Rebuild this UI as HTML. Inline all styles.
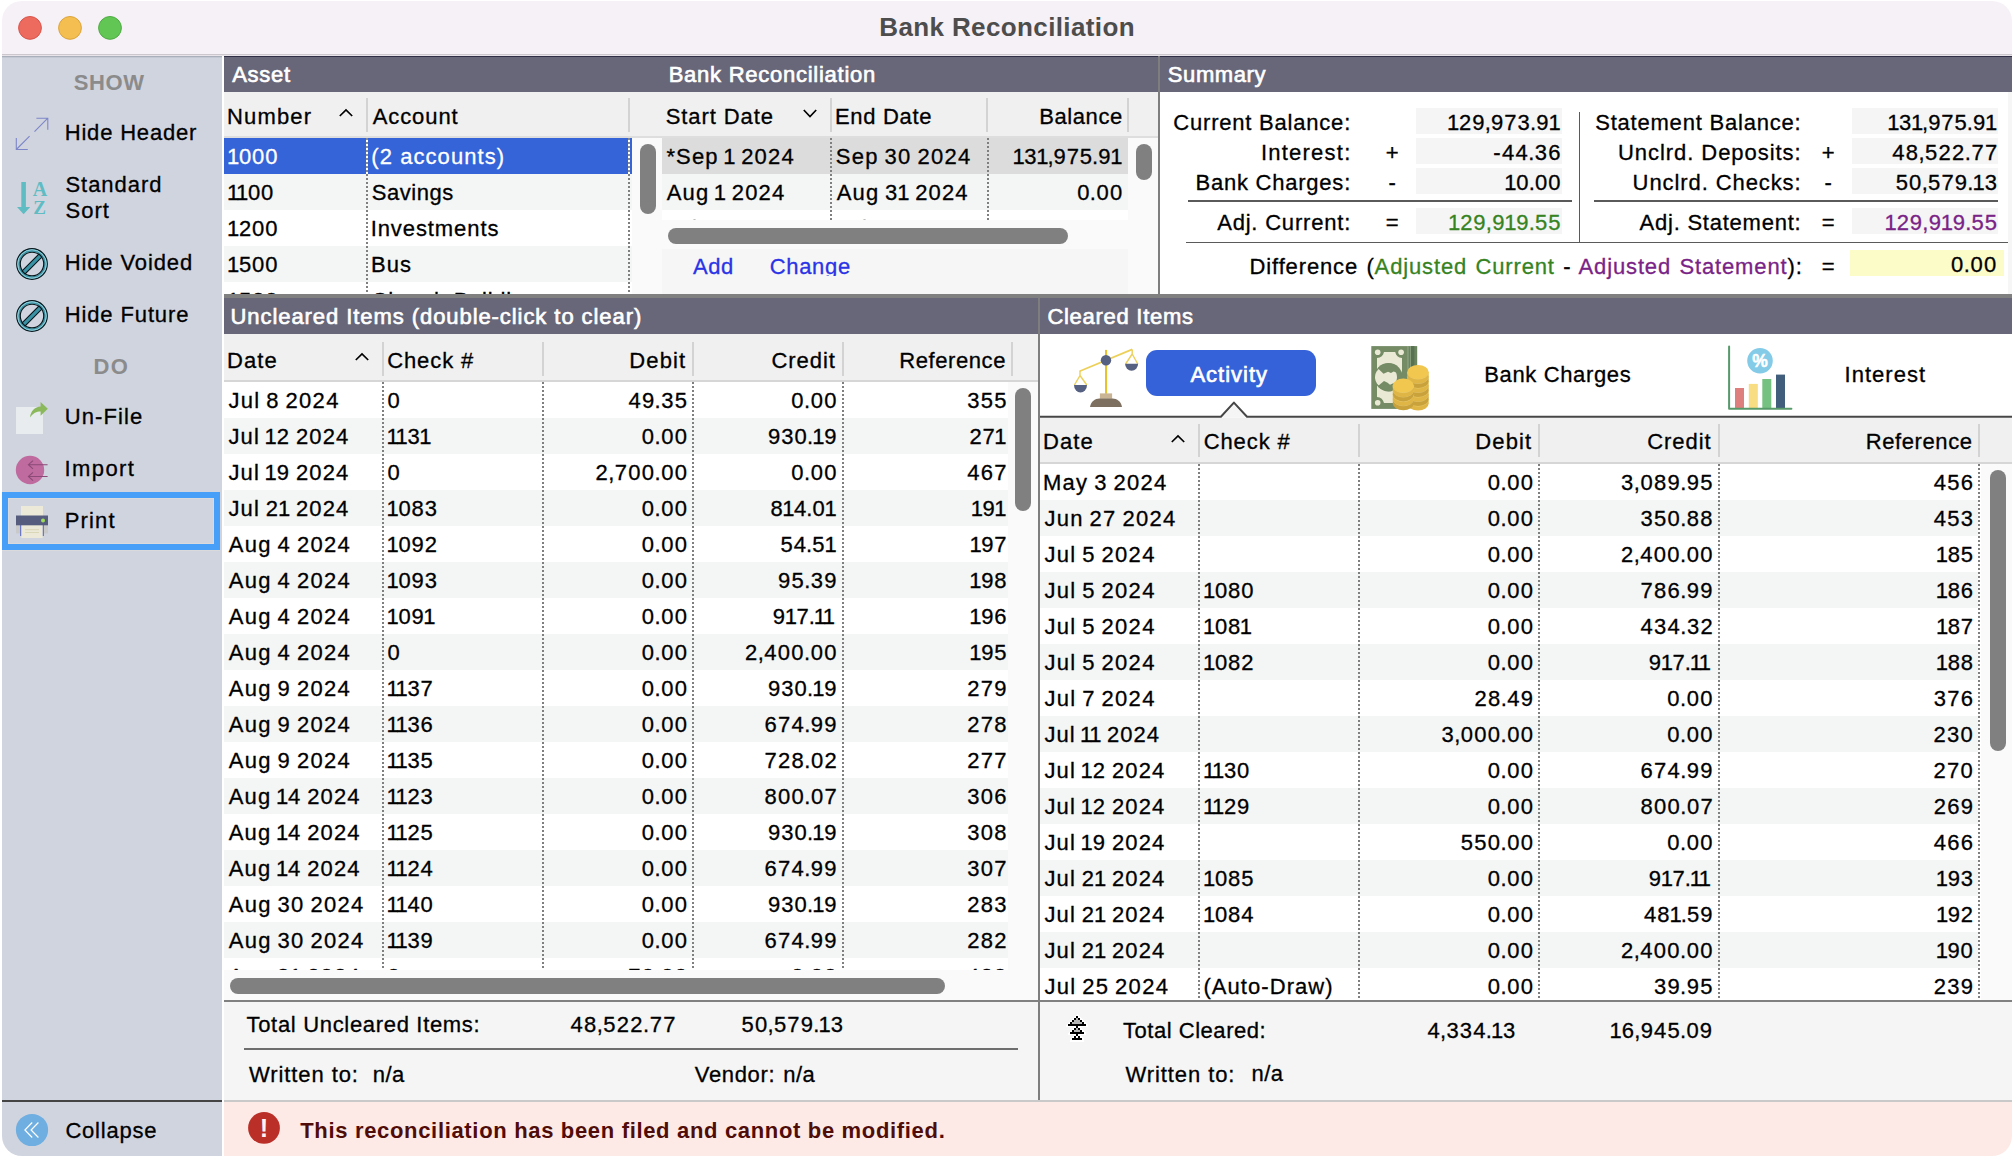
<!DOCTYPE html><html lang="en"><head><meta charset="utf-8"><title>Bank Reconciliation</title><style>
*{box-sizing:border-box;margin:0;padding:0}
html,body{width:2012px;height:1156px;background:#fff;overflow:hidden}
body{font-family:"Liberation Sans",sans-serif;font-size:22px;line-height:26px;color:#000;position:relative}
.win{position:absolute;left:2px;top:1px;width:2010px;height:1155px;border-radius:20px;overflow:hidden;background:#fff}
.abs{position:absolute}
.t{position:absolute;white-space:nowrap;line-height:26px;-webkit-text-stroke:0.3px}
.n{--l:1.27px;letter-spacing:var(--l);word-spacing:-1.5px}
.n i{font-style:normal;letter-spacing:calc(var(--l) - 2.4px);margin:0 1.2px 0 -1.2px}
.n b{font-weight:inherit;margin:0 -0.8px}
.bar{position:absolute;background:#686779;color:#fff;height:36px}
.bar .t{color:#fff}
.hdr{position:absolute;background:#f0f0f0}
.sep{position:absolute;width:2px;background:#d3d3d3}
.dot{position:absolute;width:2px;background-image:linear-gradient(to bottom,#7f7f7f 0,#7f7f7f 2px,transparent 2px,transparent 4px);background-size:2px 4px}
.thumb{position:absolute;background:#808080;border-radius:8px}
.row{position:absolute;left:0;height:36px}
.alt{background:#f4f5f5}
.vbox{position:absolute;background:#f5f5f5;height:26px}
svg{position:absolute;overflow:visible}
</style></head><body>
<div class="win"><div class="abs" style="left:-2px;top:-1px;width:2012px;height:1156px">
<header class="abs" style="left:0;top:0;width:2012px;height:54px;background:#f6f0f7">
<svg style="left:10px;top:10px" width="120" height="36" viewBox="10 10 120 36"><circle cx="30" cy="27.9" r="11.4" fill="#ed6a5f" stroke="#d8554b" stroke-width="1"/><circle cx="70" cy="27.9" r="11.4" fill="#f4bf50" stroke="#dba43c" stroke-width="1"/><circle cx="110" cy="27.9" r="11.4" fill="#62c655" stroke="#4fab43" stroke-width="1"/></svg>
<span class="t title" style="top:12.25px;left:879.26px;letter-spacing:0.38px;color:#4d4d4d;font-weight:700;-webkit-text-stroke:0;font-size:26px;line-height:30px;">Bank Reconciliation</span>
</header>
<div style="position:absolute;left:0px;top:54px;width:2012px;height:1px;background:#cbc7cd;"></div>
<div style="position:absolute;left:0px;top:55px;width:2012px;height:1px;background:#e8e4ea;"></div>
<nav aria-label="Sidebar"><div class="abs" style="left:0;top:56px;width:222px;height:1100px;background:#d0d4df"></div>
<span class="t" style="top:69.50px;left:73.87px;letter-spacing:0.57px;color:#8b8b8b;font-weight:700;-webkit-text-stroke:0;">SHOW</span>
<span class="t" style="top:354.00px;left:93.53px;letter-spacing:1.40px;color:#8b8b8b;font-weight:700;-webkit-text-stroke:0;">DO</span>
<div style="position:absolute;left:2px;top:56px;width:220px;height:1px;background:#a9afbb;"></div>
<div style="position:absolute;left:2px;top:57px;width:220px;height:1px;background:#c3c8d3;"></div>
<div class="abs" style="left:2px;top:492px;width:218px;height:58px;border:6px solid #479ff7"></div>
<div class="abs" style="left:8px;top:498px;width:206px;height:46px;border:1px solid #dad9dc"></div>
<div style="position:absolute;left:2px;top:550px;width:218px;height:1px;background:#dadadd;"></div>
<span class="t" style="top:120.00px;left:64.70px;letter-spacing:0.82px;">Hide Header</span>
<span class="t" style="top:172.00px;left:65.50px;letter-spacing:0.95px;">Standard</span>
<span class="t" style="top:197.50px;left:65.50px;letter-spacing:1.02px;">Sort</span>
<span class="t" style="top:250.00px;left:64.70px;letter-spacing:0.89px;">Hide Voided</span>
<span class="t" style="top:301.50px;left:64.70px;letter-spacing:0.88px;">Hide Future</span>
<span class="t" style="top:404.00px;left:64.80px;letter-spacing:1.09px;">Un-File</span>
<span class="t" style="top:456.00px;left:64.47px;letter-spacing:1.42px;">Import</span>
<span class="t" style="top:507.75px;left:64.70px;letter-spacing:1.18px;">Print</span>
<span class="t" style="top:1117.50px;left:65.38px;letter-spacing:0.78px;">Collapse</span>
<div style="position:absolute;left:2px;top:1100px;width:220px;height:2px;background:#444444;"></div>
<svg style="left:8px;top:108px" width="50" height="50" viewBox="8 108 50 50" fill="none" stroke="#7d86c8" stroke-width="1.1"><path d="M34.5 131.7 L47.8 118.2 M36.4 118.2 H47.8 V129.8"/><path d="M29.6 136.2 L16.3 149.5 M16.3 138 V149.5 H27.8"/></svg>
<svg style="left:8px;top:176px" width="50" height="44" viewBox="8 176 50 44"><path d="M21.3 182 H25.9 V207 H30.2 L23.6 214.2 L17 207 H21.3 Z" fill="#5fbcc3"/><text x="40" y="196" text-anchor="middle" font-family="Liberation Serif, serif" font-weight="700" font-size="20" fill="#5fbcc3">A</text><text x="39.6" y="214" text-anchor="middle" font-family="Liberation Serif, serif" font-weight="700" font-size="19" fill="#5fbcc3">Z</text></svg>
<svg style="left:14px;top:246px" width="36" height="36" viewBox="-18 -18 36 36"><circle r="15.25" fill="none" stroke="#06161b" stroke-width="1.3"/><circle r="13.5" fill="none" stroke="#3a93a5" stroke-width="2.6"/><circle r="14.2" fill="none" stroke="#b9eaf2" stroke-width="0.7"/><circle r="11.75" fill="none" stroke="#06161b" stroke-width="1.2"/><path d="M-9.9 6.9 L6.9 -9.9 L9.9 -6.9 L-6.9 9.9 Z" fill="#3a93a5" stroke="#06161b" stroke-width="1.1"/><path d="M-10.6 7.6 L7.6 -10.6 M-7.6 10.6 L10.6 -7.6" stroke="#3a93a5" stroke-width="0" /></svg>
<svg style="left:14px;top:298px" width="36" height="36" viewBox="-18 -18 36 36"><circle r="15.25" fill="none" stroke="#06161b" stroke-width="1.3"/><circle r="13.5" fill="none" stroke="#3a93a5" stroke-width="2.6"/><circle r="14.2" fill="none" stroke="#b9eaf2" stroke-width="0.7"/><circle r="11.75" fill="none" stroke="#06161b" stroke-width="1.2"/><path d="M-9.9 6.9 L6.9 -9.9 L9.9 -6.9 L-6.9 9.9 Z" fill="#3a93a5" stroke="#06161b" stroke-width="1.1"/><path d="M-10.6 7.6 L7.6 -10.6 M-7.6 10.6 L10.6 -7.6" stroke="#3a93a5" stroke-width="0" /></svg>
<svg style="left:12px;top:398px" width="40" height="40" viewBox="12 398 40 40"><rect x="16" y="407" width="27" height="27" fill="#e8ecef"/><path d="M30 417.4 C31 410.5 35 407 40.6 406.6 V402 L47.8 408.8 L40.6 415.8 V411.4 C36.5 411.4 33 413 30 417.4 Z" fill="#8ab85b"/></svg>
<svg style="left:12px;top:452px" width="40" height="36" viewBox="12 452 40 36"><circle cx="30" cy="470" r="14.2" fill="#bf6b9f"/><path d="M47.6 464.7 H28.4 M33 460.6 L28.4 464.7 L33 468.8 M47.6 476.5 H28.4 M33 472.4 L28.4 476.5 L33 480.6" fill="none" stroke="#8b4a77" stroke-width="1.1"/></svg>
<svg style="left:12px;top:502px" width="40" height="40" viewBox="12 502 40 40"><rect x="21" y="506" width="22" height="10" fill="#ece9d8"/><rect x="16" y="525" width="4.2" height="8.4" fill="#c9c9c9"/><rect x="43.8" y="525" width="4.2" height="8.4" fill="#c9c9c9"/><rect x="20" y="525" width="1.6" height="11" fill="#6c79c2"/><rect x="42.4" y="525" width="1.6" height="11" fill="#6c79c2"/><rect x="21.4" y="524" width="21.2" height="14" fill="#ece9d8"/><rect x="16" y="515.5" width="32" height="9.8" fill="#555c7e"/><circle cx="43" cy="520.5" r="2" fill="#9fdc5a"/><path d="M25 529.7 H39 M25 532.5 H39" stroke="#d6d0b0" stroke-width="0.8"/></svg>
<svg style="left:14px;top:1112px" width="36" height="36" viewBox="14 1112 36 36"><circle cx="32" cy="1130" r="16.1" fill="#6faee0"/><path d="M32.2 1122.5 L24.9 1130 L32.2 1137.5 M38.4 1122.5 L31.1 1130 L38.4 1137.5" fill="none" stroke="#fff" stroke-width="1.2"/></svg>
</nav>
<section aria-label="Asset accounts and bank reconciliations"><div class="abs" style="left:224px;top:56px;width:934px;height:238px;background:#fff"></div>
<div class="bar" style="left:224px;top:56px;width:934px;border-top:1px solid #2f2e46"></div>
<span class="t" style="top:62.00px;left:232.21px;letter-spacing:0.73px;color:#fff;-webkit-text-stroke:0.65px #fff;">Asset</span>
<span class="t" style="top:62.00px;left:668.70px;letter-spacing:0.74px;color:#fff;-webkit-text-stroke:0.65px #fff;">Bank Reconciliation</span>
<div style="position:absolute;left:224px;top:92px;width:934px;height:44px;background:#f0f0f0;"></div>
<div style="position:absolute;left:224px;top:136px;width:934px;height:2px;background:#dedede;"></div>
<div class="sep" style="left:366px;top:98px;height:34px"></div>
<div class="sep" style="left:628px;top:98px;height:34px"></div>
<div class="sep" style="left:830px;top:98px;height:34px"></div>
<div class="sep" style="left:986px;top:98px;height:34px"></div>
<div class="sep" style="left:1127px;top:98px;height:34px"></div>
<span class="t" style="top:103.75px;left:226.95px;letter-spacing:1.18px;">Number</span>
<svg style="left:336px;top:106px" width="20" height="16" viewBox="336 106 20 16"><path d="M339.8 116 L346 110 L352.2 116" fill="none" stroke="#000" stroke-width="1.7"/></svg>
<span class="t" style="top:103.75px;left:372.66px;letter-spacing:0.92px;">Account</span>
<span class="t" style="top:103.75px;left:665.75px;letter-spacing:0.91px;">Start Date</span>
<svg style="left:800px;top:106.2px" width="20" height="16" viewBox="800 106.2 20 16"><path d="M803.8 110.2 L810 116.7 L816.2 110.2" fill="none" stroke="#000" stroke-width="1.7"/></svg>
<span class="t" style="top:103.75px;left:834.95px;letter-spacing:0.69px;">End Date</span>
<span class="t" style="top:103.75px;right:889.18px;letter-spacing:0.59px;">Balance</span>
<div class="abs" style="left:224px;top:138px;width:408px;height:156px;overflow:hidden">
<div class="row" style="top:0px;width:408px;background:#3563d8">
<span class="t n" style="left:4.27px;top:5.75px;--l:0.87px;color:#fff;"><i>1</i>000</span>
<span class="t" style="top:5.75px;left:147.34px;letter-spacing:1.06px;color:#fff;">(2 accounts)</span>
</div>
<div class="row" style="top:36px;width:408px;background:#f4f5f5">
<span class="t n" style="left:4.27px;top:5.75px;--l:0.82px;"><i>11</i>00</span>
<span class="t" style="top:5.75px;left:147.70px;letter-spacing:0.55px;">Savings</span>
</div>
<div class="row" style="top:72px;width:408px;background:#fff">
<span class="t n" style="left:4.27px;top:5.75px;--l:0.87px;"><i>1</i>200</span>
<span class="t" style="top:5.75px;left:146.67px;letter-spacing:0.92px;">Investments</span>
</div>
<div class="row" style="top:108px;width:408px;background:#f4f5f5">
<span class="t n" style="left:4.27px;top:5.75px;--l:0.87px;"><i>1</i>500</span>
<span class="t" style="top:5.75px;left:146.90px;letter-spacing:1.10px;">Bus</span>
</div>
<div class="row" style="top:144px;width:408px;background:#fff">
<span class="t n" style="left:4.27px;top:5.75px;--l:0.87px;"><i>1</i>520</span>
<span class="t" style="top:5.75px;left:147.58px;letter-spacing:0.73px;">Church Building</span>
</div>
<div class="dot" style="left:142px;top:0px;height:156px;"></div>
<div class="dot" style="left:404px;top:0px;height:156px;"></div>
<div class="dot" style="left:142px;top:0;height:36px;background-image:linear-gradient(to bottom,#8a8a8a 0,#8a8a8a 2px,#fff 2px,#fff 4px)"></div>
<div class="dot" style="left:404px;top:0;height:36px;background-image:linear-gradient(to bottom,#8a8a8a 0,#8a8a8a 2px,#fff 2px,#fff 4px)"></div>
</div>
<div style="position:absolute;left:632px;top:138px;width:30px;height:156px;background:#fafafa;"></div>
<div class="thumb" style="left:640px;top:144px;width:16px;height:70px"></div>
<div class="abs" style="left:662px;top:138px;width:466px;height:82px;overflow:hidden">
<div class="row" style="top:0px;width:466px;background:#dcdcdc">
<span class="t n" style="left:4.40px;top:5.75px;--l:1.15px;">*Sep <i>1</i> 2024</span>
<span class="t n" style="left:173.75px;top:5.75px;">Sep 30 2024</span>
<span class="t n" style="left:351.64px;top:5.75px;--l:0.87px;"><i>1</i>3<i>1</i><b>,</b>975<b>.</b>9<i>1</i></span>
</div>
<div class="row" style="top:36px;width:466px;background:#f4f5f5">
<span class="t n" style="left:4.71px;top:5.75px;--l:1.14px;">Aug <i>1</i> 2024</span>
<span class="t n" style="left:174.71px;top:5.75px;--l:1.15px;">Aug 3<i>1</i> 2024</span>
<span class="t n" style="left:415.13px;top:5.75px;">0<b>.</b>00</span>
</div>
<div class="row" style="top:72px;width:466px;background:#fff">
<span class="t n" style="left:4.41px;top:5.75px;--l:1.14px;">Jul <i>1</i> 2024</span>
<span class="t n" style="left:174.41px;top:5.75px;--l:1.15px;">Jul 3<i>1</i> 2024</span>
<span class="t n" style="left:415.13px;top:5.75px;">0<b>.</b>00</span>
</div>
<div class="dot" style="left:168px;top:0px;height:82px;"></div>
<div class="dot" style="left:324.6px;top:0px;height:82px;"></div>
</div>
<div style="position:absolute;left:1128px;top:138px;width:29.5px;height:156px;background:#fafafa;"></div>
<div class="thumb" style="left:1135.5px;top:144px;width:16px;height:35.5px"></div>
<div style="position:absolute;left:662px;top:220px;width:466px;height:29px;background:#fafafa;"></div>
<div class="thumb" style="left:668px;top:228px;width:400px;height:16px"></div>
<div class="abs" style="left:662px;top:249px;width:466px;height:26.5px;background:#f6f6f6;overflow:hidden">
<span class="t" style="top:4.75px;left:30.96px;letter-spacing:0.53px;color:#2a33e6;">Add</span>
<span class="t" style="top:4.75px;left:107.63px;letter-spacing:0.71px;color:#2a33e6;">Change</span>
</div>
<div style="position:absolute;left:662px;top:275.5px;width:466px;height:18.5px;background:#f6f6f6;"></div>
<div style="position:absolute;left:1157.5px;top:56px;width:2.2px;height:238px;background:#7e7e7e;"></div>
</section>
<section aria-label="Summary">
<div class="bar" style="left:1160px;top:56px;width:852px;border-top:1px solid #2f2e46"></div>
<span class="t" style="top:62.00px;left:1167.75px;letter-spacing:0.61px;color:#fff;-webkit-text-stroke:0.65px #fff;">Summary</span>
<div style="position:absolute;left:2007.5px;top:92px;width:4.5px;height:202px;background:#f6f6f6;"></div>
<div style="position:absolute;left:1415.75px;top:108px;width:146.25px;height:25.75px;background:#f5f5f5;"></div>
<span class="t" style="top:110.00px;right:660.96px;letter-spacing:0.79px;">Current Balance:</span>
<span class="t n" style="left:1448.24px;top:110.00px;--l:1.00px;"><i>1</i>29<b>,</b>973<b>.</b>9<i>1</i></span>
<div style="position:absolute;left:1415.75px;top:138px;width:146.25px;height:25.75px;background:#f5f5f5;"></div>
<span class="t" style="top:140.00px;right:660.52px;letter-spacing:1.23px;">Interest:</span>
<span class="t" style="top:140.00px;left:1391.93px;letter-spacing:-0.32px;transform:translateX(-50%);">+</span>
<span class="t n" style="left:1493.34px;top:140.00px;">-44<b>.</b>36</span>
<div style="position:absolute;left:1415.75px;top:168px;width:146.25px;height:25.75px;background:#f5f5f5;"></div>
<span class="t" style="top:170.00px;right:660.97px;letter-spacing:0.77px;">Bank Charges:</span>
<span class="t" style="top:170.00px;left:1392.02px;letter-spacing:-0.32px;transform:translateX(-50%);">-</span>
<span class="t n" style="left:1505.43px;top:170.00px;--l:0.97px;"><i>1</i>0<b>.</b>00</span>
<div style="position:absolute;left:1415.75px;top:208px;width:146.25px;height:25.75px;background:#f5f5f5;"></div>
<span class="t" style="top:210.00px;right:660.94px;letter-spacing:0.80px;">Adj. Current:</span>
<span class="t" style="top:210.00px;left:1391.93px;letter-spacing:-0.32px;transform:translateX(-50%);">=</span>
<span class="t n" style="left:1449.29px;top:210.00px;--l:1.00px;color:#36831f;"><i>1</i>29<b>,</b>9<i>1</i>9<b>.</b>55</span>
<div style="position:absolute;left:1852px;top:108px;width:145.75px;height:25.75px;background:#f5f5f5;"></div>
<span class="t" style="top:110.00px;right:210.60px;letter-spacing:0.79px;">Statement Balance:</span>
<span class="t n" style="left:1888.34px;top:110.00px;--l:0.87px;"><i>1</i>3<i>1</i><b>,</b>975<b>.</b>9<i>1</i></span>
<div style="position:absolute;left:1852px;top:138px;width:145.75px;height:25.75px;background:#f5f5f5;"></div>
<span class="t" style="top:140.00px;right:210.44px;letter-spacing:0.95px;">Unclrd. Deposits:</span>
<span class="t" style="top:140.00px;left:1827.93px;letter-spacing:-0.32px;transform:translateX(-50%);">+</span>
<span class="t n" style="left:1892.27px;top:140.00px;">48<b>,</b>522<b>.</b>77</span>
<div style="position:absolute;left:1852px;top:168px;width:145.75px;height:25.75px;background:#f5f5f5;"></div>
<span class="t" style="top:170.00px;right:210.48px;letter-spacing:0.91px;">Unclrd. Checks:</span>
<span class="t" style="top:170.00px;left:1828.02px;letter-spacing:-0.32px;transform:translateX(-50%);">-</span>
<span class="t n" style="left:1895.73px;top:170.00px;--l:1.12px;">50<b>,</b>579<b>.</b><i>1</i>3</span>
<div style="position:absolute;left:1852px;top:208px;width:145.75px;height:25.75px;background:#f5f5f5;"></div>
<span class="t" style="top:210.00px;right:210.63px;letter-spacing:0.76px;">Adj. Statement:</span>
<span class="t" style="top:210.00px;left:1827.93px;letter-spacing:-0.32px;transform:translateX(-50%);">=</span>
<span class="t n" style="left:1885.79px;top:210.00px;--l:1.00px;color:#7a2386;"><i>1</i>29<b>,</b>9<i>1</i>9<b>.</b>55</span>
<div style="position:absolute;left:1188px;top:200px;width:384px;height:1.6px;background:#5a5a5a;"></div>
<div style="position:absolute;left:1594px;top:200px;width:403.75px;height:1.6px;background:#5a5a5a;"></div>
<div style="position:absolute;left:1578.5px;top:112px;width:1.7px;height:130px;background:#5a5a5a;"></div>
<div style="position:absolute;left:1186px;top:241.7px;width:821.75px;height:1.7px;background:#5a5a5a;"></div>
<div style="position:absolute;left:1849.75px;top:250px;width:154.25px;height:25.75px;background:#fcfcc9;"></div>
<span class="t" style="right:209.39px;top:254.25px;letter-spacing:0.86px;word-spacing:1.4px">Difference (<span style="color:#36831f">Adjusted Current</span> - <span style="color:#7a2386">Adjusted Statement</span>):</span>
<span class="t" style="top:254.25px;left:1827.93px;letter-spacing:-0.32px;transform:translateX(-50%);">=</span>
<span class="t n" style="left:1951.08px;top:251.75px;">0<b>.</b>00</span>
</section>
<div style="position:absolute;left:224px;top:294px;width:1788px;height:4px;background:#808080;"></div>
<section aria-label="Uncleared Items">
<div class="bar" style="left:224px;top:298px;width:813.5px"></div>
<span class="t" style="top:303.50px;left:230.55px;letter-spacing:0.93px;color:#fff;-webkit-text-stroke:0.65px #fff;">Uncleared Items (double-click to clear)</span>
<div style="position:absolute;left:224px;top:334px;width:813.5px;height:46px;background:#f0f0f0;"></div>
<div style="position:absolute;left:224px;top:380px;width:813.5px;height:2px;background:#d6d6d6;"></div>
<div class="sep" style="left:382px;top:342px;height:34px"></div>
<div class="sep" style="left:542px;top:342px;height:34px"></div>
<div class="sep" style="left:692px;top:342px;height:34px"></div>
<div class="sep" style="left:842px;top:342px;height:34px"></div>
<div class="sep" style="left:1011px;top:342px;height:34px"></div>
<span class="t" style="top:347.75px;left:226.95px;letter-spacing:1.10px;">Date</span>
<svg style="left:352px;top:350px" width="20" height="16" viewBox="352 350 20 16"><path d="M355.8 360 L362 354 L368.2 360" fill="none" stroke="#000" stroke-width="1.7"/></svg>
<span class="t" style="top:347.75px;left:387.13px;letter-spacing:0.92px;">Check #</span>
<span class="t" style="top:347.75px;right:1325.69px;letter-spacing:1.15px;">Debit</span>
<span class="t" style="top:347.75px;right:1176.12px;letter-spacing:0.97px;">Credit</span>
<span class="t" style="top:347.75px;right:1006.04px;letter-spacing:0.58px;">Reference</span>
<div class="abs" style="left:224px;top:382px;width:784px;height:587.5px;overflow:hidden;background:#fff">
<div class="row" style="top:0px;width:784px">
<span class="t n" style="left:4.41px;top:6.25px;">Jul 8 2024</span>
<span class="t n" style="left:163.39px;top:6.25px;">0</span>
<span class="t n" style="left:404.39px;top:6.25px;">49<b>.</b>35</span>
<span class="t n" style="left:567.33px;top:6.25px;">0<b>.</b>00</span>
<span class="t n" style="left:743.18px;top:6.25px;">355</span>
</div>
<div class="row alt" style="top:36px;width:784px">
<span class="t n" style="left:4.41px;top:6.25px;--l:1.15px;">Jul <i>1</i>2 2024</span>
<span class="t n" style="left:163.77px;top:6.25px;--l:0.82px;"><i>11</i>3<i>1</i></span>
<span class="t n" style="left:417.83px;top:6.25px;">0<b>.</b>00</span>
<span class="t n" style="left:544.10px;top:6.25px;--l:1.03px;">930<b>.</b><i>1</i>9</span>
<span class="t n" style="left:745.43px;top:6.25px;--l:0.82px;">27<i>1</i></span>
</div>
<div class="row" style="top:72px;width:784px">
<span class="t n" style="left:4.41px;top:6.25px;--l:1.15px;">Jul <i>1</i>9 2024</span>
<span class="t n" style="left:163.39px;top:6.25px;">0</span>
<span class="t n" style="left:371.53px;top:6.25px;">2<b>,</b>700<b>.</b>00</span>
<span class="t n" style="left:567.33px;top:6.25px;">0<b>.</b>00</span>
<span class="t n" style="left:743.36px;top:6.25px;">467</span>
</div>
<div class="row alt" style="top:108px;width:784px">
<span class="t n" style="left:4.41px;top:6.25px;--l:1.15px;">Jul 2<i>1</i> 2024</span>
<span class="t n" style="left:163.77px;top:6.25px;--l:0.87px;"><i>1</i>083</span>
<span class="t n" style="left:417.83px;top:6.25px;">0<b>.</b>00</span>
<span class="t n" style="left:546.39px;top:6.25px;--l:0.82px;">8<i>1</i>4<b>.</b>0<i>1</i></span>
<span class="t n" style="left:747.83px;top:6.25px;--l:0.82px;"><i>1</i>9<i>1</i></span>
</div>
<div class="row" style="top:144px;width:784px">
<span class="t n" style="left:4.71px;top:6.25px;">Aug 4 2024</span>
<span class="t n" style="left:163.77px;top:6.25px;--l:0.87px;"><i>1</i>092</span>
<span class="t n" style="left:417.83px;top:6.25px;">0<b>.</b>00</span>
<span class="t n" style="left:556.44px;top:6.25px;--l:0.97px;">54<b>.</b>5<i>1</i></span>
<span class="t n" style="left:746.66px;top:6.25px;--l:0.82px;"><i>1</i>97</span>
</div>
<div class="row alt" style="top:180px;width:784px">
<span class="t n" style="left:4.71px;top:6.25px;">Aug 4 2024</span>
<span class="t n" style="left:163.77px;top:6.25px;--l:0.87px;"><i>1</i>093</span>
<span class="t n" style="left:417.83px;top:6.25px;">0<b>.</b>00</span>
<span class="t n" style="left:554.01px;top:6.25px;">95<b>.</b>39</span>
<span class="t n" style="left:746.51px;top:6.25px;--l:0.82px;"><i>1</i>98</span>
</div>
<div class="row" style="top:216px;width:784px">
<span class="t n" style="left:4.71px;top:6.25px;">Aug 4 2024</span>
<span class="t n" style="left:163.77px;top:6.25px;--l:0.82px;"><i>1</i>09<i>1</i></span>
<span class="t n" style="left:417.83px;top:6.25px;">0<b>.</b>00</span>
<span class="t n" style="left:548.79px;top:6.25px;--l:0.82px;">9<i>1</i>7<b>.</b><i>11</i></span>
<span class="t n" style="left:746.52px;top:6.25px;--l:0.82px;"><i>1</i>96</span>
</div>
<div class="row alt" style="top:252px;width:784px">
<span class="t n" style="left:4.71px;top:6.25px;">Aug 4 2024</span>
<span class="t n" style="left:163.39px;top:6.25px;">0</span>
<span class="t n" style="left:417.83px;top:6.25px;">0<b>.</b>00</span>
<span class="t n" style="left:521.03px;top:6.25px;">2<b>,</b>400<b>.</b>00</span>
<span class="t n" style="left:746.48px;top:6.25px;--l:0.82px;"><i>1</i>95</span>
</div>
<div class="row" style="top:288px;width:784px">
<span class="t n" style="left:4.71px;top:6.25px;">Aug 9 2024</span>
<span class="t n" style="left:163.77px;top:6.25px;--l:0.82px;"><i>11</i>37</span>
<span class="t n" style="left:417.83px;top:6.25px;">0<b>.</b>00</span>
<span class="t n" style="left:544.10px;top:6.25px;--l:1.03px;">930<b>.</b><i>1</i>9</span>
<span class="t n" style="left:743.30px;top:6.25px;">279</span>
</div>
<div class="row alt" style="top:324px;width:784px">
<span class="t n" style="left:4.71px;top:6.25px;">Aug 9 2024</span>
<span class="t n" style="left:163.77px;top:6.25px;--l:0.82px;"><i>11</i>36</span>
<span class="t n" style="left:417.83px;top:6.25px;">0<b>.</b>00</span>
<span class="t n" style="left:540.50px;top:6.25px;">674<b>.</b>99</span>
<span class="t n" style="left:743.21px;top:6.25px;">278</span>
</div>
<div class="row" style="top:360px;width:784px">
<span class="t n" style="left:4.71px;top:6.25px;">Aug 9 2024</span>
<span class="t n" style="left:163.77px;top:6.25px;--l:0.82px;"><i>11</i>35</span>
<span class="t n" style="left:417.83px;top:6.25px;">0<b>.</b>00</span>
<span class="t n" style="left:540.57px;top:6.25px;">728<b>.</b>02</span>
<span class="t n" style="left:743.36px;top:6.25px;">277</span>
</div>
<div class="row alt" style="top:396px;width:784px">
<span class="t n" style="left:4.71px;top:6.25px;--l:1.15px;">Aug <i>1</i>4 2024</span>
<span class="t n" style="left:163.77px;top:6.25px;--l:0.82px;"><i>11</i>23</span>
<span class="t n" style="left:417.83px;top:6.25px;">0<b>.</b>00</span>
<span class="t n" style="left:540.57px;top:6.25px;">800<b>.</b>07</span>
<span class="t n" style="left:743.22px;top:6.25px;">306</span>
</div>
<div class="row" style="top:432px;width:784px">
<span class="t n" style="left:4.71px;top:6.25px;--l:1.15px;">Aug <i>1</i>4 2024</span>
<span class="t n" style="left:163.77px;top:6.25px;--l:0.82px;"><i>11</i>25</span>
<span class="t n" style="left:417.83px;top:6.25px;">0<b>.</b>00</span>
<span class="t n" style="left:544.10px;top:6.25px;--l:1.03px;">930<b>.</b><i>1</i>9</span>
<span class="t n" style="left:743.21px;top:6.25px;">308</span>
</div>
<div class="row alt" style="top:468px;width:784px">
<span class="t n" style="left:4.71px;top:6.25px;--l:1.15px;">Aug <i>1</i>4 2024</span>
<span class="t n" style="left:163.77px;top:6.25px;--l:0.82px;"><i>11</i>24</span>
<span class="t n" style="left:417.83px;top:6.25px;">0<b>.</b>00</span>
<span class="t n" style="left:540.50px;top:6.25px;">674<b>.</b>99</span>
<span class="t n" style="left:743.36px;top:6.25px;">307</span>
</div>
<div class="row" style="top:504px;width:784px">
<span class="t n" style="left:4.71px;top:6.25px;">Aug 30 2024</span>
<span class="t n" style="left:163.77px;top:6.25px;--l:0.82px;"><i>11</i>40</span>
<span class="t n" style="left:417.83px;top:6.25px;">0<b>.</b>00</span>
<span class="t n" style="left:544.10px;top:6.25px;--l:1.03px;">930<b>.</b><i>1</i>9</span>
<span class="t n" style="left:743.22px;top:6.25px;">283</span>
</div>
<div class="row alt" style="top:540px;width:784px">
<span class="t n" style="left:4.71px;top:6.25px;">Aug 30 2024</span>
<span class="t n" style="left:163.77px;top:6.25px;--l:0.82px;"><i>11</i>39</span>
<span class="t n" style="left:417.83px;top:6.25px;">0<b>.</b>00</span>
<span class="t n" style="left:540.50px;top:6.25px;">674<b>.</b>99</span>
<span class="t n" style="left:743.36px;top:6.25px;">282</span>
</div>
<div class="row" style="top:576px;width:784px">
<span class="t n" style="left:4.71px;top:6.25px;--l:1.15px;">Aug 3<i>1</i> 2024</span>
<span class="t n" style="left:163.39px;top:6.25px;">0</span>
<span class="t n" style="left:404.33px;top:6.25px;">70<b>.</b>00</span>
<span class="t n" style="left:567.33px;top:6.25px;">0<b>.</b>00</span>
<span class="t n" style="left:743.11px;top:6.25px;">420</span>
</div>
<div class="dot" style="left:158px;top:0px;height:588px;"></div>
<div class="dot" style="left:318px;top:0px;height:588px;"></div>
<div class="dot" style="left:468px;top:0px;height:588px;"></div>
<div class="dot" style="left:618px;top:0px;height:588px;"></div>
</div>
<div style="position:absolute;left:1008px;top:382px;width:29.5px;height:618px;background:#fafafa;"></div>
<div class="thumb" style="left:1015.25px;top:388px;width:16px;height:123px"></div>
<div style="position:absolute;left:224px;top:969.5px;width:784px;height:30.5px;background:#fafafa;"></div>
<div class="thumb" style="left:230px;top:978px;width:714.5px;height:16px"></div>
<div style="position:absolute;left:224px;top:1002px;width:813.5px;height:98px;background:#f5f5f5;"></div>
<span class="t" style="top:1012.00px;left:246.51px;letter-spacing:0.68px;">Total Uncleared Items:</span>
<span class="t n" style="left:570.50px;top:1012.00px;">48<b>,</b>522<b>.</b>77</span>
<span class="t n" style="left:741.62px;top:1012.00px;--l:1.12px;">50<b>,</b>579<b>.</b><i>1</i>3</span>
<div style="position:absolute;left:244px;top:1048.3px;width:774px;height:1.6px;background:#6e6e6e;"></div>
<span class="t" style="top:1061.50px;left:248.90px;letter-spacing:0.92px;">Written to:</span>
<span class="t" style="top:1061.50px;left:372.79px;letter-spacing:0.44px;">n/a</span>
<span class="t" style="top:1061.50px;left:694.80px;letter-spacing:0.66px;">Vendor:</span>
<span class="t" style="top:1061.50px;left:783.24px;letter-spacing:0.44px;">n/a</span>
</section>
<div style="position:absolute;left:1037.5px;top:298px;width:2.5px;height:802px;background:#7e7e7e;"></div>
<section aria-label="Cleared Items">
<div class="bar" style="left:1040px;top:298px;width:972px"></div>
<span class="t" style="top:303.50px;left:1047.38px;letter-spacing:0.73px;color:#fff;-webkit-text-stroke:0.65px #fff;">Cleared Items</span>
<div style="position:absolute;left:1040px;top:334px;width:972px;height:82px;background:#fff;"></div>
<div class="abs" style="left:1146px;top:350px;width:170px;height:46px;border-radius:11px;background:#3562d9"></div>
<span class="t" style="top:362.00px;left:1190.46px;letter-spacing:0.99px;color:#fff;-webkit-text-stroke:0.65px #fff;">Activity</span>
<span class="t" style="top:362.00px;left:1484.20px;letter-spacing:0.65px;">Bank Charges</span>
<span class="t" style="top:362.00px;left:1844.47px;letter-spacing:1.05px;">Interest</span>
<svg style="left:1066px;top:340px" width="80" height="74" viewBox="0 0 80 74"><path d="M13.6 31.2 L66.2 9.4" stroke="#ecd05a" stroke-width="1.7" fill="none"/><path d="M66.2 9.4 V14 L59.6 24 M66.2 14 L71.8 24 M14 31 V35.5 L8.4 45 M14 35.5 L20.8 45" stroke="#ecd05a" stroke-width="1.4" fill="none"/><rect x="39" y="9.9" width="2.1" height="44" fill="#e8c130"/><circle cx="40" cy="20.2" r="5.2" fill="#566080"/><path d="M59.1 23.8 H72.1 A6.5 7 0 0 1 59.1 23.8 Z" fill="#566080"/><path d="M8 45 H21 A6.5 7.6 0 0 1 8 45 Z" fill="#566080"/><rect x="33.9" y="53.4" width="12.2" height="5.4" fill="#c9b596"/><path d="M24 67.1 C25 61.5 29 58.6 33.5 58.6 H46.5 C51 58.6 55 61.5 56 67.1 Z" fill="#7d7060"/></svg>
<svg style="left:1362px;top:340px" width="80" height="74" viewBox="0 0 80 74"><rect x="45.8" y="6.1" width="9.4" height="30" fill="#6b8460"/><rect x="49" y="6.1" width="3.4" height="30" fill="#587150"/><rect x="45.8" y="6.1" width="0.8" height="62" fill="#8fa583"/><rect x="48.2" y="6.1" width="0.7" height="30" fill="#8fa583"/><rect x="9.3" y="6.1" width="36.5" height="62.8" fill="#748b65"/><path d="M22 11.9 H33.2 C34 15.5 36.2 17.6 40 18 V57 C36.2 57.4 34 59.5 33.2 63 H22 C21.2 59.5 19 57.4 15 57 V18 C19 17.6 21.2 15.5 22 11.9 Z" fill="#eae9d6"/><circle cx="15.7" cy="12.2" r="2.8" fill="#eae9d6"/><circle cx="39.1" cy="12.2" r="2.8" fill="#eae9d6"/><circle cx="15.7" cy="62.8" r="2.8" fill="#eae9d6"/><circle cx="26.5" cy="37.2" r="14.2" fill="#748b65"/><circle cx="24" cy="37.2" r="11" fill="#eae9d6"/><path d="M16 28.5 C19 24.6 23 23.4 27 23.4 C31.5 23.4 35.5 25.6 37.8 29.5 L34.4 32.4 L31.6 31.6 L29 33 L26 31.8 L21.5 33.8 Z" fill="#748b65"/><path d="M16 46 C19 49.8 23 51.2 27 51.2 C29 51.2 30.5 50.8 31.8 50.2 V43 L28 44.8 L25.6 42.8 L22 41 L19 43.4 Z" fill="#748b65"/>
<path d="M45.3 59.0 V63.5 A10.7 7.0 0 0 0 66.7 63.5 V59.0 Z" fill="#dfb545"/><path d="M45.3 59.0 A10.7 7.0 0 0 0 66.7 59.0" fill="none" stroke="#f0dc98" stroke-width="0.5"/><path d="M45.3 54.5 V59.0 A10.7 7.0 0 0 0 66.7 59.0 V54.5 Z" fill="#c9a23b"/><path d="M45.3 54.5 A10.7 7.0 0 0 0 66.7 54.5" fill="none" stroke="#f0dc98" stroke-width="0.5"/><path d="M45.3 50.0 V54.5 A10.7 7.0 0 0 0 66.7 54.5 V50.0 Z" fill="#dfb545"/><path d="M45.3 50.0 A10.7 7.0 0 0 0 66.7 50.0" fill="none" stroke="#f0dc98" stroke-width="0.5"/><path d="M45.3 45.5 V50.0 A10.7 7.0 0 0 0 66.7 50.0 V45.5 Z" fill="#c9a23b"/><path d="M45.3 45.5 A10.7 7.0 0 0 0 66.7 45.5" fill="none" stroke="#f0dc98" stroke-width="0.5"/><path d="M45.3 41.0 V45.5 A10.7 7.0 0 0 0 66.7 45.5 V41.0 Z" fill="#dfb545"/><path d="M45.3 41.0 A10.7 7.0 0 0 0 66.7 41.0" fill="none" stroke="#f0dc98" stroke-width="0.5"/><path d="M45.3 36.5 V41.0 A10.7 7.0 0 0 0 66.7 41.0 V36.5 Z" fill="#c9a23b"/><path d="M45.3 36.5 A10.7 7.0 0 0 0 66.7 36.5" fill="none" stroke="#f0dc98" stroke-width="0.5"/><path d="M45.3 32.0 V36.5 A10.7 7.0 0 0 0 66.7 36.5 V32.0 Z" fill="#dfb545"/><path d="M45.3 32.0 A10.7 7.0 0 0 0 66.7 32.0" fill="none" stroke="#f0dc98" stroke-width="0.5"/><ellipse cx="56" cy="32.0" rx="10.7" ry="7.0" fill="#f2c74f"/><path d="M30.799999999999997 58.800000000000004 V63.2 A10.5 7.0 0 0 0 51.8 63.2 V58.800000000000004 Z" fill="#c9a23b"/><path d="M30.799999999999997 58.800000000000004 A10.5 7.0 0 0 0 51.8 58.800000000000004" fill="none" stroke="#f0dc98" stroke-width="0.5"/><path d="M30.799999999999997 54.400000000000006 V58.800000000000004 A10.5 7.0 0 0 0 51.8 58.800000000000004 V54.400000000000006 Z" fill="#dfb545"/><path d="M30.799999999999997 54.400000000000006 A10.5 7.0 0 0 0 51.8 54.400000000000006" fill="none" stroke="#f0dc98" stroke-width="0.5"/><path d="M30.799999999999997 50.00000000000001 V54.400000000000006 A10.5 7.0 0 0 0 51.8 54.400000000000006 V50.00000000000001 Z" fill="#c9a23b"/><path d="M30.799999999999997 50.00000000000001 A10.5 7.0 0 0 0 51.8 50.00000000000001" fill="none" stroke="#f0dc98" stroke-width="0.5"/><path d="M30.799999999999997 45.6 V50.0 A10.5 7.0 0 0 0 51.8 50.0 V45.6 Z" fill="#dfb545"/><path d="M30.799999999999997 45.6 A10.5 7.0 0 0 0 51.8 45.6" fill="none" stroke="#f0dc98" stroke-width="0.5"/><ellipse cx="41.3" cy="45.6" rx="10.5" ry="7.0" fill="#f2c74f"/></svg>
<svg style="left:1720px;top:340px" width="80" height="74" viewBox="0 0 80 74"><rect x="15" y="48" width="9" height="20.4" fill="#df7f7d"/><rect x="28.8" y="43.9" width="9" height="24.5" fill="#f8dd82"/><rect x="42.3" y="39" width="9" height="29.4" fill="#75c181"/><rect x="56" y="34.6" width="9" height="33.8" fill="#415e7d"/><path d="M9.1 6.4 V68.8 H71.4" fill="none" stroke="#579a6a" stroke-width="2" stroke-linecap="round" stroke-linejoin="round"/><circle cx="40" cy="20.8" r="12.8" fill="#84cbe8"/><text x="40" y="27.1" text-anchor="middle" font-family="Liberation Sans, sans-serif" font-weight="700" font-size="17.5" fill="#fff" stroke="#fff" stroke-width="0.5">%</text></svg>
<svg style="left:1040px;top:398px" width="972" height="22" viewBox="1040 398 972 22"><path d="M1222 417.8 L1233.9 404.4 L1245.8 417.8 Z" fill="#f5f5f5"/><path d="M1040 416.8 H1220.9 L1233.9 402.6 L1247 416.8 H2012" fill="none" stroke="#464646" stroke-width="2" stroke-linejoin="round"/></svg>
<div style="position:absolute;left:1040px;top:418px;width:972px;height:43.5px;background:#f0f0f0;"></div>
<div style="position:absolute;left:1040px;top:461.5px;width:972px;height:2px;background:#d6d6d6;"></div>
<div class="sep" style="left:1198px;top:424px;height:33px"></div>
<div class="sep" style="left:1358px;top:424px;height:33px"></div>
<div class="sep" style="left:1538px;top:424px;height:33px"></div>
<div class="sep" style="left:1718px;top:424px;height:33px"></div>
<div class="sep" style="left:1978px;top:424px;height:33px"></div>
<span class="t" style="top:429.00px;left:1042.95px;letter-spacing:1.10px;">Date</span>
<svg style="left:1168px;top:431.5px" width="20" height="16" viewBox="1168 431.5 20 16"><path d="M1171.8 441.5 L1178 435.5 L1184.2 441.5" fill="none" stroke="#000" stroke-width="1.7"/></svg>
<span class="t" style="top:429.00px;left:1203.63px;letter-spacing:0.92px;">Check #</span>
<span class="t" style="top:429.00px;right:479.69px;letter-spacing:1.15px;">Debit</span>
<span class="t" style="top:429.00px;right:300.37px;letter-spacing:0.97px;">Credit</span>
<span class="t" style="top:429.00px;right:39.44px;letter-spacing:0.58px;">Reference</span>
<div class="abs" style="left:1040px;top:464px;width:940px;height:536px;overflow:hidden;background:#fff">
<div class="row" style="top:0px;width:938px">
<span class="t n" style="left:2.95px;top:6.25px;">May 3 2024</span>
<span class="t n" style="left:447.83px;top:6.25px;">0<b>.</b>00</span>
<span class="t n" style="left:581.10px;top:6.25px;">3<b>,</b>089<b>.</b>95</span>
<span class="t n" style="left:893.72px;top:6.25px;">456</span>
</div>
<div class="row alt" style="top:36px;width:938px">
<span class="t n" style="left:4.41px;top:6.25px;">Jun 27 2024</span>
<span class="t n" style="left:447.83px;top:6.25px;">0<b>.</b>00</span>
<span class="t n" style="left:600.42px;top:6.25px;">350<b>.</b>88</span>
<span class="t n" style="left:893.72px;top:6.25px;">453</span>
</div>
<div class="row" style="top:72px;width:938px">
<span class="t n" style="left:4.41px;top:6.25px;">Jul 5 2024</span>
<span class="t n" style="left:447.83px;top:6.25px;">0<b>.</b>00</span>
<span class="t n" style="left:581.03px;top:6.25px;">2<b>,</b>400<b>.</b>00</span>
<span class="t n" style="left:896.98px;top:6.25px;--l:0.82px;"><i>1</i>85</span>
</div>
<div class="row alt" style="top:108px;width:938px">
<span class="t n" style="left:4.41px;top:6.25px;">Jul 5 2024</span>
<span class="t n" style="left:164.27px;top:6.25px;--l:0.87px;"><i>1</i>080</span>
<span class="t n" style="left:447.83px;top:6.25px;">0<b>.</b>00</span>
<span class="t n" style="left:600.50px;top:6.25px;">786<b>.</b>99</span>
<span class="t n" style="left:897.02px;top:6.25px;--l:0.82px;"><i>1</i>86</span>
</div>
<div class="row" style="top:144px;width:938px">
<span class="t n" style="left:4.41px;top:6.25px;">Jul 5 2024</span>
<span class="t n" style="left:164.27px;top:6.25px;--l:0.82px;"><i>1</i>08<i>1</i></span>
<span class="t n" style="left:447.83px;top:6.25px;">0<b>.</b>00</span>
<span class="t n" style="left:600.57px;top:6.25px;">434<b>.</b>32</span>
<span class="t n" style="left:897.16px;top:6.25px;--l:0.82px;"><i>1</i>87</span>
</div>
<div class="row alt" style="top:180px;width:938px">
<span class="t n" style="left:4.41px;top:6.25px;">Jul 5 2024</span>
<span class="t n" style="left:164.27px;top:6.25px;--l:0.87px;"><i>1</i>082</span>
<span class="t n" style="left:447.83px;top:6.25px;">0<b>.</b>00</span>
<span class="t n" style="left:608.79px;top:6.25px;--l:0.82px;">9<i>1</i>7<b>.</b><i>11</i></span>
<span class="t n" style="left:897.01px;top:6.25px;--l:0.82px;"><i>1</i>88</span>
</div>
<div class="row" style="top:216px;width:938px">
<span class="t n" style="left:4.41px;top:6.25px;">Jul 7 2024</span>
<span class="t n" style="left:434.51px;top:6.25px;">28<b>.</b>49</span>
<span class="t n" style="left:627.33px;top:6.25px;">0<b>.</b>00</span>
<span class="t n" style="left:893.72px;top:6.25px;">376</span>
</div>
<div class="row alt" style="top:252px;width:938px">
<span class="t n" style="left:4.41px;top:6.25px;--l:1.03px;">Jul <i>11</i> 2024</span>
<span class="t n" style="left:401.53px;top:6.25px;">3<b>,</b>000<b>.</b>00</span>
<span class="t n" style="left:627.33px;top:6.25px;">0<b>.</b>00</span>
<span class="t n" style="left:893.61px;top:6.25px;">230</span>
</div>
<div class="row" style="top:288px;width:938px">
<span class="t n" style="left:4.41px;top:6.25px;--l:1.15px;">Jul <i>1</i>2 2024</span>
<span class="t n" style="left:164.27px;top:6.25px;--l:0.82px;"><i>11</i>30</span>
<span class="t n" style="left:447.83px;top:6.25px;">0<b>.</b>00</span>
<span class="t n" style="left:600.50px;top:6.25px;">674<b>.</b>99</span>
<span class="t n" style="left:893.61px;top:6.25px;">270</span>
</div>
<div class="row alt" style="top:324px;width:938px">
<span class="t n" style="left:4.41px;top:6.25px;--l:1.15px;">Jul <i>1</i>2 2024</span>
<span class="t n" style="left:164.27px;top:6.25px;--l:0.82px;"><i>11</i>29</span>
<span class="t n" style="left:447.83px;top:6.25px;">0<b>.</b>00</span>
<span class="t n" style="left:600.57px;top:6.25px;">800<b>.</b>07</span>
<span class="t n" style="left:893.80px;top:6.25px;">269</span>
</div>
<div class="row" style="top:360px;width:938px">
<span class="t n" style="left:4.41px;top:6.25px;--l:1.15px;">Jul <i>1</i>9 2024</span>
<span class="t n" style="left:420.82px;top:6.25px;">550<b>.</b>00</span>
<span class="t n" style="left:627.33px;top:6.25px;">0<b>.</b>00</span>
<span class="t n" style="left:893.72px;top:6.25px;">466</span>
</div>
<div class="row alt" style="top:396px;width:938px">
<span class="t n" style="left:4.41px;top:6.25px;--l:1.15px;">Jul 2<i>1</i> 2024</span>
<span class="t n" style="left:164.27px;top:6.25px;--l:0.87px;"><i>1</i>085</span>
<span class="t n" style="left:447.83px;top:6.25px;">0<b>.</b>00</span>
<span class="t n" style="left:608.79px;top:6.25px;--l:0.82px;">9<i>1</i>7<b>.</b><i>11</i></span>
<span class="t n" style="left:897.02px;top:6.25px;--l:0.82px;"><i>1</i>93</span>
</div>
<div class="row" style="top:432px;width:938px">
<span class="t n" style="left:4.41px;top:6.25px;--l:1.15px;">Jul 2<i>1</i> 2024</span>
<span class="t n" style="left:164.27px;top:6.25px;--l:0.87px;"><i>1</i>084</span>
<span class="t n" style="left:447.83px;top:6.25px;">0<b>.</b>00</span>
<span class="t n" style="left:604.10px;top:6.25px;--l:1.03px;">48<i>1</i><b>.</b>59</span>
<span class="t n" style="left:897.16px;top:6.25px;--l:0.82px;"><i>1</i>92</span>
</div>
<div class="row alt" style="top:468px;width:938px">
<span class="t n" style="left:4.41px;top:6.25px;--l:1.15px;">Jul 2<i>1</i> 2024</span>
<span class="t n" style="left:447.83px;top:6.25px;">0<b>.</b>00</span>
<span class="t n" style="left:581.03px;top:6.25px;">2<b>,</b>400<b>.</b>00</span>
<span class="t n" style="left:896.91px;top:6.25px;--l:0.82px;"><i>1</i>90</span>
</div>
<div class="row" style="top:504px;width:938px">
<span class="t n" style="left:4.41px;top:6.25px;">Jul 25 2024</span>
<span class="t" style="top:6.25px;left:163.39px;letter-spacing:1.07px;">(Auto-Draw)</span>
<span class="t n" style="left:447.83px;top:6.25px;">0<b>.</b>00</span>
<span class="t n" style="left:613.89px;top:6.25px;">39<b>.</b>95</span>
<span class="t n" style="left:893.80px;top:6.25px;">239</span>
</div>
<div class="dot" style="left:158px;top:0px;height:536px;"></div>
<div class="dot" style="left:318px;top:0px;height:536px;"></div>
<div class="dot" style="left:498px;top:0px;height:536px;"></div>
<div class="dot" style="left:678px;top:0px;height:536px;"></div>
<div class="dot" style="left:938px;top:0px;height:536px;"></div>
</div>
<div style="position:absolute;left:1980.5px;top:464px;width:31.5px;height:536px;background:#fafafa;"></div>
<div class="thumb" style="left:1990px;top:469.5px;width:16px;height:281px"></div>
<div style="position:absolute;left:224px;top:1000px;width:1788px;height:1.8px;background:#808080;"></div>
<div style="position:absolute;left:1040px;top:1002px;width:972px;height:98px;background:#f5f5f5;"></div>
<svg style="left:1064px;top:1012px" width="28" height="32" viewBox="1064 1012 28 32" shape-rendering="crispEdges"><path d="M1077 1014 L1088 1025 V1027 H1080 L1086 1033 V1035 H1080 L1084 1039 V1042 H1070 V1039 L1074 1035 H1068 V1033 L1074 1027 H1066 V1025 Z" fill="#fff"/><rect x="1076" y="1018" width="2" height="2" fill="#b4b4b4"/><rect x="1074" y="1020" width="2" height="2" fill="#b4b4b4"/><rect x="1076" y="1020" width="2" height="2" fill="#b4b4b4"/><rect x="1078" y="1020" width="2" height="2" fill="#b4b4b4"/><rect x="1072" y="1022" width="2" height="2" fill="#b4b4b4"/><rect x="1074" y="1022" width="2" height="2" fill="#b4b4b4"/><rect x="1076" y="1022" width="2" height="2" fill="#b4b4b4"/><rect x="1078" y="1022" width="2" height="2" fill="#b4b4b4"/><rect x="1080" y="1022" width="2" height="2" fill="#b4b4b4"/><rect x="1076" y="1028" width="2" height="2" fill="#b4b4b4"/><rect x="1074" y="1030" width="2" height="2" fill="#b4b4b4"/><rect x="1076" y="1030" width="2" height="2" fill="#b4b4b4"/><rect x="1078" y="1030" width="2" height="2" fill="#b4b4b4"/><rect x="1076" y="1016" width="2" height="2" fill="#000"/><rect x="1074" y="1018" width="2" height="2" fill="#000"/><rect x="1078" y="1018" width="2" height="2" fill="#000"/><rect x="1072" y="1020" width="2" height="2" fill="#000"/><rect x="1080" y="1020" width="2" height="2" fill="#000"/><rect x="1070" y="1022" width="2" height="2" fill="#000"/><rect x="1082" y="1022" width="2" height="2" fill="#000"/><rect x="1068" y="1024" width="2" height="2" fill="#000"/><rect x="1070" y="1024" width="2" height="2" fill="#000"/><rect x="1072" y="1024" width="2" height="2" fill="#000"/><rect x="1074" y="1024" width="2" height="2" fill="#000"/><rect x="1076" y="1024" width="2" height="2" fill="#000"/><rect x="1078" y="1024" width="2" height="2" fill="#000"/><rect x="1080" y="1024" width="2" height="2" fill="#000"/><rect x="1082" y="1024" width="2" height="2" fill="#000"/><rect x="1084" y="1024" width="2" height="2" fill="#000"/><rect x="1076" y="1026" width="2" height="2" fill="#000"/><rect x="1074" y="1028" width="2" height="2" fill="#000"/><rect x="1078" y="1028" width="2" height="2" fill="#000"/><rect x="1072" y="1030" width="2" height="2" fill="#000"/><rect x="1080" y="1030" width="2" height="2" fill="#000"/><rect x="1070" y="1032" width="2" height="2" fill="#000"/><rect x="1072" y="1032" width="2" height="2" fill="#000"/><rect x="1074" y="1032" width="2" height="2" fill="#000"/><rect x="1076" y="1032" width="2" height="2" fill="#000"/><rect x="1078" y="1032" width="2" height="2" fill="#000"/><rect x="1080" y="1032" width="2" height="2" fill="#000"/><rect x="1082" y="1032" width="2" height="2" fill="#000"/><rect x="1076" y="1034" width="2" height="2" fill="#000"/><rect x="1074" y="1036" width="2" height="2" fill="#000"/><rect x="1078" y="1036" width="2" height="2" fill="#000"/><rect x="1072" y="1038" width="2" height="2" fill="#000"/><rect x="1074" y="1038" width="2" height="2" fill="#000"/><rect x="1076" y="1038" width="2" height="2" fill="#000"/><rect x="1078" y="1038" width="2" height="2" fill="#000"/><rect x="1080" y="1038" width="2" height="2" fill="#000"/></svg>
<span class="t" style="top:1018.00px;left:1123.01px;letter-spacing:0.53px;">Total Cleared:</span>
<span class="t n" style="left:1427.50px;top:1018.00px;--l:1.10px;">4<b>,</b>334<b>.</b><i>1</i>3</span>
<span class="t n" style="left:1610.81px;top:1018.00px;--l:1.12px;"><i>1</i>6<b>,</b>945<b>.</b>09</span>
<span class="t" style="top:1062.00px;left:1125.40px;letter-spacing:0.92px;">Written to:</span>
<span class="t" style="top:1060.50px;left:1251.54px;letter-spacing:0.44px;">n/a</span>
</section>
<footer>
<div style="position:absolute;left:224px;top:1100px;width:1788px;height:1.6px;background:#c9c9c9;"></div>
<div style="position:absolute;left:224px;top:1101.6px;width:1788px;height:54.4px;background:#fdeae7;"></div>
<svg style="left:246px;top:1110px" width="36" height="36" viewBox="246 1110 36 36"><circle cx="264" cy="1127.9" r="15.9" fill="#ba2f27"/><text x="264" y="1137.3" text-anchor="middle" font-family="Liberation Sans, sans-serif" font-weight="700" font-size="25.5" fill="#fdf3f1">!</text></svg>
<span class="t" style="top:1117.50px;left:300.25px;letter-spacing:0.67px;color:#500c06;font-weight:700;-webkit-text-stroke:0;">This reconciliation has been filed and cannot be modified.</span>
</footer>
</div></div></body></html>
